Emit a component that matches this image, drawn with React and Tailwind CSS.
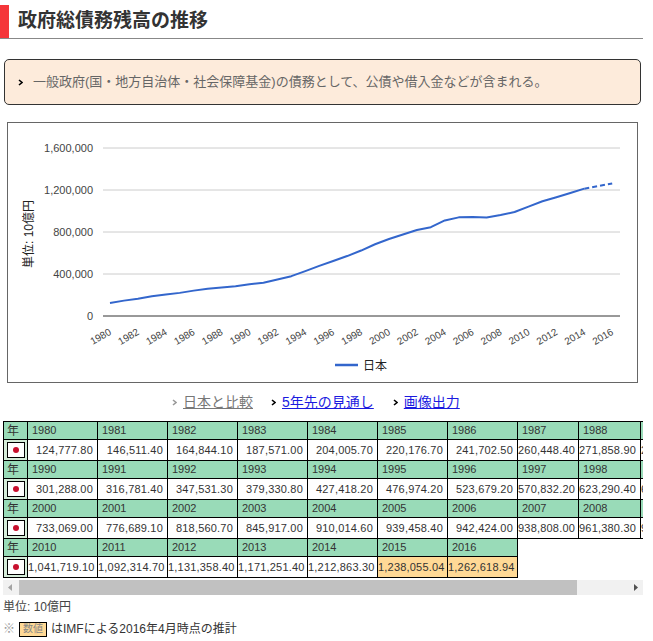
const years = Array.from({ length: 37 }, (_, i) => 1980 + i);

const values = [
  124777.8, 146511.4, 164844.1, 187571.0, 204005.7, 220176.7, 241702.5, 260448.4, 271858.9, 284120.6,
  301288.0, 316781.4, 347531.3, 379330.8, 427418.2, 476974.2, 523679.2, 570832.2, 623290.4, 683410.5,
  733069.0, 776689.1, 818560.7, 845917.0, 910014.6, 939458.4, 942424.0, 938808.0, 961380.3, 990240.8,
  1041719.1, 1092314.7, 1131358.4, 1171251.4, 1212863.3, 1238055.04, 1262618.94,
];

const fmt = (v) =>
  v.toLocaleString("en-US", { minimumFractionDigits: 2, maximumFractionDigits: 2 });

const cx = (i) => 110 + i * 13.95;
const cy = (v) => 316 - v * 0.000105;

const solid = values.slice(0, 35).map((v, i) => `${cx(i)},${cy(v)}`).join(" ");
const dashed = values.slice(34).map((v, i) => `${cx(i + 34)},${cy(v)}`).join(" ");

const grid = [
  { v: 1600000, label: "1,600,000" },
  { v: 1200000, label: "1,200,000" },
  { v: 800000, label: "800,000" },
  { v: 400000, label: "400,000" },
];

const colWidths = ["w-[24px]", "w-[70px]", "w-[70px]", "w-[70px]", "w-[70px]", "w-[70px]", "w-[70px]", "w-[70px]", "w-[61px]", "w-[62px]", "w-[61px]"];

function Chevron({ color = "#000" }) {
  return (
    <svg width="5" height="7" viewBox="0 0 5 7" className="shrink-0">
      <path d="M1 1 L4 3.5 L1 6" fill="none" stroke={color} strokeWidth="1.6" />
    </svg>
  );
}

function Chart() {
  return (
    <div className="ml-[7px] mt-[17px] w-[631px] h-[261px] border border-[#666]">
      <svg width="629" height="259" viewBox="8 123 629 259" className="block">
        {grid.map((g) => (
          <g key={g.v}>
            <line x1="103" x2="620" y1={cy(g.v)} y2={cy(g.v)} stroke="#ccc" strokeWidth="1" />
            <text x="93" y={cy(g.v) + 4} textAnchor="end" fontSize="11" fill="#444" fontFamily="Liberation Sans, sans-serif">
              {g.label}
            </text>
          </g>
        ))}
        <line x1="103" x2="620" y1="316" y2="316" stroke="#333" strokeWidth="1" />
        <text x="93" y="320" textAnchor="end" fontSize="11" fill="#444" fontFamily="Liberation Sans, sans-serif">
          0
        </text>
        <text
          x="33"
          y="234"
          textAnchor="middle"
          fontSize="12"
          fill="#222"
          transform="rotate(-90 33 234)"
          fontFamily="Liberation Sans, Noto Sans CJK JP, sans-serif"
        >
          単位: 10億円
        </text>
        {years.map((y, i) =>
          i % 2 === 0 ? (
            <text
              key={y}
              x={cx(i) + 2}
              y="334"
              textAnchor="end"
              fontSize="10"
              fill="#444"
              transform={`rotate(-30 ${cx(i) + 2} 334)`}
              fontFamily="Liberation Sans, sans-serif"
            >
              {y}
            </text>
          ) : null
        )}
        <polyline points={solid} fill="none" stroke="#3366cc" strokeWidth="2" strokeLinejoin="round" />
        <polyline points={dashed} fill="none" stroke="#3366cc" strokeWidth="2" strokeDasharray="5 3" />
        <line x1="335" x2="358" y1="365" y2="365" stroke="#3366cc" strokeWidth="2.5" />
        <text x="363" y="370" fontSize="12" fill="#222" fontFamily="Noto Sans CJK JP, sans-serif">
          日本
        </text>
      </svg>
    </div>
  );
}

function Flag() {
  return (
    <div className="mx-auto w-[18px] h-[16px] border border-black bg-white flex items-center justify-center">
      <div className="w-[6px] h-[6px] rounded-full bg-[#c8102e]" />
    </div>
  );
}

function DataTable() {
  const groups = [0, 10, 20, 30].map((start) => ({
    years: years.slice(start, start + 10),
    vals: values.slice(start, start + 10),
    start,
  }));
  return (
    <div className="ml-[3px] w-[640px] overflow-hidden">
      <table className="table-fixed border-collapse w-[698px] text-[11px] text-[#333] font-['Liberation_Sans','Noto_Sans_CJK_JP',sans-serif]">
        <colgroup>
          {colWidths.map((w, i) => (
            <col key={i} className={w} />
          ))}
        </colgroup>
        <tbody>
          {groups.map((g) => [
            <tr key={`h${g.start}`} className="h-[18px]">
              <td className="border border-black bg-[#99dbb8] pl-[3px] leading-none text-[12px]">年</td>
              {g.years.map((y) => (
                <td key={y} className="border border-black bg-[#99dbb8] pl-[4px] leading-none">
                  {y}
                </td>
              ))}
            </tr>,
            <tr key={`d${g.start}`} className="h-[21px]">
              <td className="border border-black bg-[#d5ecd9] p-0">
                <Flag />
              </td>
              {g.vals.map((v, i) => (
                <td
                  key={i}
                  className={`border border-black text-right pr-[4px] leading-none tracking-[0.2px] ${
                    g.start + i >= 35 ? "bg-[#ffd996]" : "bg-white"
                  }`}
                >
                  {fmt(v)}
                </td>
              ))}
            </tr>,
          ])}
        </tbody>
      </table>
      <div className="mt-[2px] h-[15px] bg-[#f1f1f1] flex items-center">
        <svg width="16" height="15" viewBox="0 0 16 15" className="shrink-0">
          <path d="M9 4 L5 7.5 L9 11 Z" fill="#a3a3a3" />
        </svg>
        <div className="w-[558px] h-[15px] bg-[#c1c1c1]" />
        <div className="flex-1" />
        <svg width="16" height="15" viewBox="0 0 16 15" className="shrink-0">
          <path d="M7 4 L11 7.5 L7 11 Z" fill="#505050" />
        </svg>
      </div>
    </div>
  );
}

export default function App() {
  return (
    <div className="w-[653px] bg-white pb-[4px] font-['Liberation_Sans','Noto_Sans_CJK_JP',sans-serif]">
      <div className="mt-[5px] mr-[10px] h-[34px] flex items-stretch border-b border-[#888]">
        <div className="w-[9px] bg-[#f5363a]" />
        <h1 className="pl-[9px] flex items-center text-[19px] font-bold text-[#333]">政府総債務残高の推移</h1>
      </div>

      <div className="mt-[20px] ml-[4px] w-[637px] h-[46px] rounded-[5px] border border-[#333] bg-[#fdebdb] flex items-center pl-[13px] gap-[10px]">
        <Chevron />
        <span className="text-[13px] text-[#666]">
          一般政府(国・地方自治体・社会保障基金)の債務として、公債や借入金などが含まれる。
        </span>
      </div>

      <Chart />

      <div className="h-[38px] flex items-center pl-[172px] text-[14px]">
        <Chevron color="#999" />
        <a className="ml-[6px] text-[#777] underline">日本と比較</a>
        <span className="ml-[18px]" />
        <Chevron />
        <a className="ml-[6px] text-[#1a1adf] underline">5年先の見通し</a>
        <span className="ml-[19px]" />
        <Chevron />
        <a className="ml-[6px] text-[#1a1adf] underline">画像出力</a>
      </div>

      <DataTable />

      <div className="mt-[2px] ml-[3px] h-[20px] flex items-center text-[12px] text-[#444]">単位: 10億円</div>
      <div className="mt-[2px] ml-[3px] h-[20px] flex items-center text-[12px] text-[#333]">
        <span className="text-[#999]">※</span>
        <span className="ml-[4px] h-[15px] px-[3px] border border-black bg-[#ffd996] text-[10px] text-[#888] flex items-center leading-none">
          数値
        </span>
        <span className="ml-[4px]">はIMFによる2016年4月時点の推計</span>
      </div>
    </div>
  );
}
